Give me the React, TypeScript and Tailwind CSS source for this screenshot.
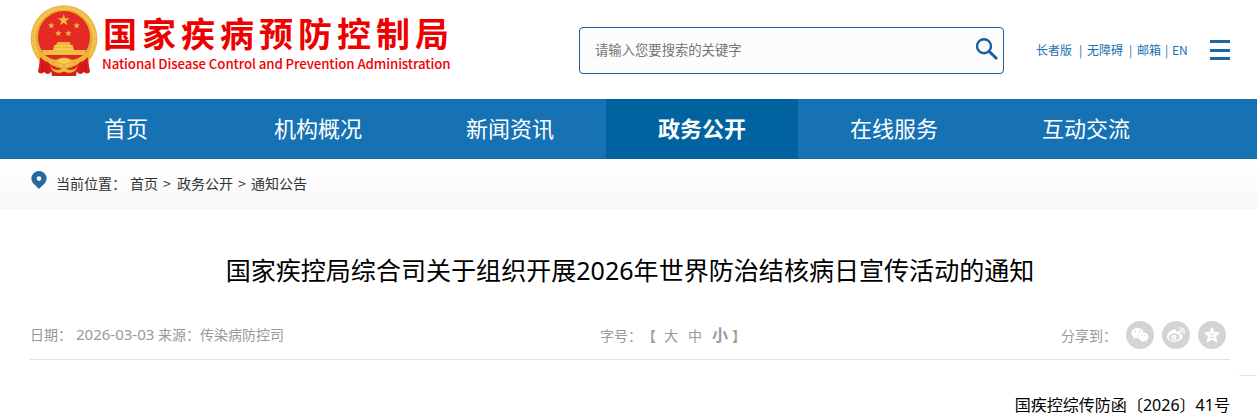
import { FaWeibo, FaWeixin } from "react-icons/fa";

const navItems = ["首页", "机构概况", "新闻资讯", "政务公开", "在线服务", "互动交流"];

const Emblem = () => (
  <svg width="68" height="72" viewBox="0 0 68 72" className="shrink-0">
    <circle cx="34" cy="33.5" r="33.3" fill="#e6ac33" />
    <circle cx="34" cy="33.5" r="30.5" fill="none" stroke="#f3c653" strokeWidth="3.5" />
    <circle cx="34" cy="33.5" r="31" fill="none" stroke="#e3ab38" strokeWidth="1" strokeDasharray="1.5 3" />
    <circle cx="34" cy="32" r="26" fill="#e32a23" />
    <g fill="#f0bb3f">
      <path d="M33.7 9 L35.1 13.3 H39.6 L36 16 L37.3 20.3 L33.7 17.7 L30.1 20.3 L31.4 16 L27.8 13.3 H32.3 Z" />
      <path id="star" d="M21.3 17.3 L22.1 19.6 H24.6 L22.6 21.1 L23.4 23.5 L21.3 22.1 L19.2 23.5 L20 21.1 L18 19.6 H20.5 Z" />
      <use href="#star" x="25.4" />
      <use href="#star" x="7" y="7.6" />
      <use href="#star" x="17" y="7.6" />
    </g>
    <path d="M27.5 37 H39.5 L41 40 H26 Z" fill="#efb53b" />
    <path d="M24.5 40 H42.5 L44 45 H23 Z" fill="#f6cb52" />
    <path d="M12 45 H56 L54 50 H14 Z" fill="#f3bd43" />
    <path d="M23.5 42.2 H43.5" stroke="#e5a52f" strokeWidth=".8" />
    <path d="M8 46 Q16 53 26 54 L31 53 Q34 51.5 37 53 L42 54 Q52 53 60 46 L59 58 Q50 58 44 65 L34 69 L24 65 Q18 58 9 58 Z" fill="#ecb63e" />
    <path d="M16 50 H52 Q46 55.5 41 54.5 Q34 50.5 27 54.5 Q22 55.5 16 50 Z" fill="#dc2922" />
    <path d="M10.5 52 L8 67 Q11 70 14 67 Q18 71 21 67 L27 62 Q21 61 18 57 Q14 56.5 10.5 52 Z" fill="#d91d1e" />
    <path d="M57.5 52 L60 67 Q57 70 54 67 Q50 71 47 67 L41 62 Q47 61 50 57 Q54 56.5 57.5 52 Z" fill="#d91d1e" />
    <path d="M13 58 L12 67 M17 60 L15 67 M55 58 L56 67 M51 60 L53 67" stroke="#b01218" strokeWidth=".9" />
    <path d="M27 55.5 Q34 51.5 41 55.5 L38 61 H30 Z" fill="#f7cc51" />
    <path d="M28 57.5 L34 60 L40 57.5" fill="none" stroke="#dda02c" strokeWidth="1" />
    <path d="M21 65 Q28 60 34 65 Q40 60 47 65 L46 71 H22 Z" fill="#d91d1e" />
    <path d="M20 60 Q24 67 31 64 L34 62.5 L37 64 Q44 67 48 60 L46 65 Q41 70 34 66.5 Q27 70 22 65 Z" fill="#edb83f" />
  </svg>
);

const Header = () => (
  <header className="flex h-[99px] pl-[30px]">
    <div className="flex w-[549px] pt-[5px]">
      <Emblem />
      <div className="flex flex-col pl-[4px] pt-[6px] text-[#ee0000]">
        <span className="h-[44px] pl-px text-[34px] leading-[43px] font-bold tracking-[5px] whitespace-nowrap">国家疾病预防控制局</span>
        <span className="h-[18px] text-[13.3px] leading-[18px] font-medium tracking-[-0.11px] whitespace-nowrap">
          National Disease Control and Prevention Administration
        </span>
      </div>
    </div>
    <div className="mt-[27px] flex h-[47px] w-[425px] justify-between rounded-[4px] border border-[#1b5f9e] bg-[#fcfcfc] pl-[15px]">
      <span className="text-[13.33px] leading-[43px] text-[#757575]">请输入您要搜索的关键字</span>
      <svg width="24" height="24" viewBox="0 0 24 24" className="mt-[9px] mr-[4px]">
        <circle cx="9" cy="9.2" r="7" fill="none" stroke="#1b5f9e" strokeWidth="2.4" />
        <path d="M14 14.2 L22 22" stroke="#1b5f9e" strokeWidth="3" />
      </svg>
    </div>
    <div className="flex pt-[40px] pl-[32px] text-[12px] leading-[20px] whitespace-pre text-[#1772b4]">
      <span className="w-[43px]">长者版</span>
      <span className="w-[8px]">|</span>
      <span className="w-[42px]">无障碍</span>
      <span className="w-[8px]">|</span>
      <span className="w-[28px]">邮箱</span>
      <span className="w-[7px]">|</span>
      <span>EN</span>
    </div>
    <div className="mt-[40px] mr-[27px] ml-auto flex h-[20px] w-[20px] flex-col justify-between">
      <i className="h-[3px] bg-[#1b66a3]" />
      <i className="h-[3px] bg-[#1b66a3]" />
      <i className="h-[3px] bg-[#1b66a3]" />
    </div>
  </header>
);

const Nav = () => (
  <nav className="flex h-[60px] bg-[#1772b4] pl-[30px]">
    {navItems.map((item) => (
      <a
        key={item}
        className={
          item === "政务公开"
            ? "w-[192px] bg-[#0063a0] text-center text-[22px] leading-[56px] font-bold text-white"
            : "w-[192px] text-center text-[22px] leading-[56px] text-white"
        }
      >
        {item}
      </a>
    ))}
  </nav>
);

const Breadcrumb = () => (
  <div className="flex h-[50px] bg-linear-to-b from-white to-[#f8f8f8] pl-[31px] text-[14px] leading-[48px] text-[#333]">
    <svg width="16" height="19" viewBox="0 0 16 19" className="mt-[12px] mr-[9px]">
      <path
        fillRule="evenodd"
        d="M8 0 A7.6 7.4 0 0 0 .4 7.5 C.4 12 5 14.5 8 18 C11 14.5 15.6 12 15.6 7.5 A7.6 7.4 0 0 0 8 0 Z M8 5.3 a2.3 2.3 0 1 1 0 4.6 a2.3 2.3 0 0 1 0 -4.6 Z"
        fill="#236aa3"
      />
    </svg>
    <span className="w-[74px]">当前位置：</span>
    <span className="w-[33px]">首页</span>
    <span className="w-[14px]">&gt;</span>
    <span className="w-[61px]">政务公开</span>
    <span className="w-[13px]">&gt;</span>
    <span>通知公告</span>
  </div>
);

const Share = () => (
  <div className="flex pr-[4px]">
    <span className="w-[65px]">分享到：</span>
    <div className="flex gap-[8px] pt-[10px] text-white">
      <span className="flex size-[28px] items-center justify-center rounded-full bg-[#d4d4d4]">
        <FaWeixin size={18} />
      </span>
      <span className="flex size-[28px] items-center justify-center rounded-full bg-[#d4d4d4]">
        <FaWeibo size={18} />
      </span>
      <span className="flex size-[28px] items-center justify-center rounded-full bg-[#d4d4d4]">
        <svg width="18" height="18" viewBox="0 0 18 18">
          <path
            d="M9 1.5 L11.2 6.4 L16.5 7 L12.6 10.6 L13.8 16 L9 13.2 L4.2 16 L5.4 10.6 L1.5 7 L6.8 6.4 Z"
            fill="#fff"
            stroke="#fff"
            strokeLinejoin="round"
          />
          <path d="M6.5 7.8 H11 L7.5 11.5 H12" fill="none" stroke="#d4d4d4" strokeWidth=".8" />
        </svg>
      </span>
    </div>
  </div>
);

export default function App() {
  return (
    <div className="h-[416px] w-[1257px] overflow-hidden bg-white font-['Noto_Sans_CJK_SC',sans-serif]">
      <Header />
      <Nav />
      <Breadcrumb />
      <main className="font-['Noto_Sans','Noto_Sans_CJK_SC',sans-serif]">
        <h1 className="h-[102px] pt-[41px] pl-[3px] text-center text-[25.05px] leading-[40px] whitespace-nowrap text-black">
          国家疾控局综合司关于组织开展2026年世界防治结核病日宣传活动的通知
        </h1>
        <div className="ml-[30px] flex h-[49px] w-[1200px] border-b border-[#e3e3e3] text-[14px] leading-[50px] whitespace-nowrap text-[#999]">
          <span className="w-[46px] leading-[48px]">日期：</span>
          <span className="w-[82px] text-[15px] leading-[47px]">2026-03-03</span>
          <span className="leading-[48px]">来源：传染病防控司</span>
          <div className="ml-auto flex w-[461px]">
            <span className="w-[42px]">字号：</span>
            <span className="w-[22px]">【</span>
            <span className="w-[24px]">大</span>
            <span className="w-[24px]">中</span>
            <span className="w-[20px] text-[16px] leading-[49px] font-bold">小</span>
            <span>】</span>
          </div>
          <Share />
        </div>
        <div className="ml-auto h-[16px] w-[18px] border-b border-[#e3e3e3]" />
        <p className="h-[40px] pt-[17px] pr-[27px] text-right text-[16.05px] leading-[24px] text-black">国疾控综传防函〔2026〕41号</p>
      </main>
    </div>
  );
}
